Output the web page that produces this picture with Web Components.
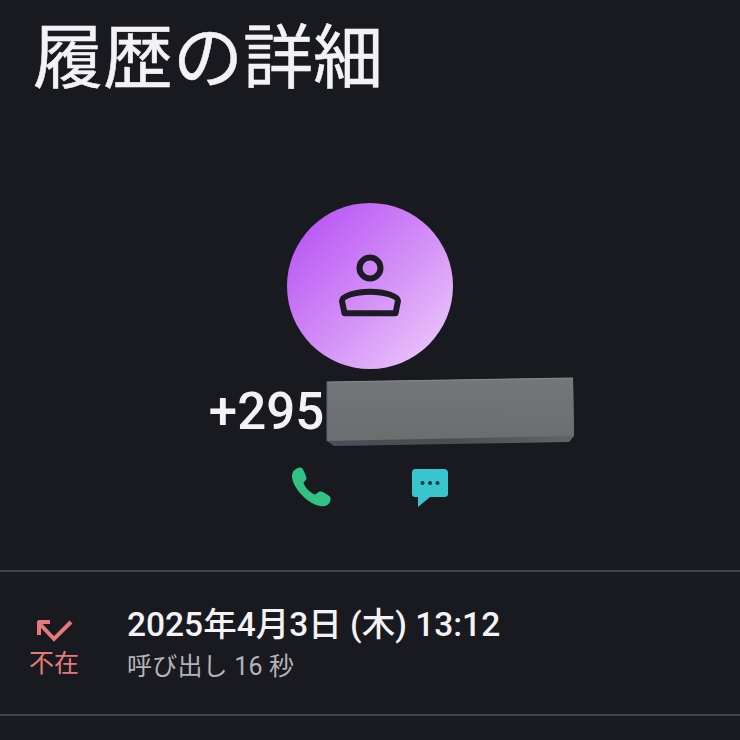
<!DOCTYPE html>
<html lang="ja">
<head>
<meta charset="utf-8">
<title>履歴の詳細</title>
<style>
  html, body { margin: 0; background: #191a1f; }
  body { font-family: Roboto, "Noto Sans CJK JP", sans-serif; color: #f3f3f6; }
</style>
</head>
<body>
<history-page>
  <span slot="title">履歴の詳細</span>
  <contact-card number="+295"></contact-card>
  <call-row date="2025年4月3日 (木) 13:12" sub="呼び出し 16 秒" kind="不在"></call-row>
</history-page>

<script>
const pageTemplate = document.createElement('template');
pageTemplate.innerHTML = `
  <style>
    :host {
      display: block;
      width: 740px;
      height: 740px;
      overflow: hidden;
      background: #191a1f;
    }
    h1 {
      margin: 0;
      padding: 10px 0 0 33px;
      height: 190px;
      box-sizing: border-box;
      font: 400 70px/85px "Noto Sans CJK JP", sans-serif;
      -webkit-text-stroke: 0.5px #f3f3f6;
      color: #f3f3f6;
    }
  </style>
  <h1><slot name="title"></slot></h1>
  <slot></slot>`;

customElements.define('history-page', class extends HTMLElement {
  constructor() {
    super();
    this.attachShadow({ mode: 'open' });
    this.shadowRoot.append(pageTemplate.content.cloneNode(true));
  }
});

const cardTemplate = document.createElement('template');
cardTemplate.innerHTML = `
  <style>
    :host {
      display: flex;
      flex-direction: column;
      align-items: center;
      height: 380px;
      padding-top: 13px;
      box-sizing: border-box;
    }
    .avatar {
      width: 166px;
      height: 166px;
      flex: none;
      border-radius: 50%;
      background: linear-gradient(135deg, #b650f5 5%, #cb7df6 40%, #eccafa 95%);
      display: flex;
      align-items: center;
      justify-content: center;
    }
    .number {
      display: flex;
      align-items: flex-start;
      height: 80px;
      margin-top: 5px;
      margin-left: 45px;
    }
    .digits {
      font: 500 51px/56px Roboto, sans-serif;
      margin-top: 10px;
    }
    .number svg { display: block; margin: 3px 0 0 2px; }
    .actions {
      display: flex;
      align-items: flex-start;
      gap: 80px;
      margin-top: 13px;
    }
    .actions svg { display: block; }
    .actions svg + svg { margin-top: 2px; }
  </style>
  <div class="avatar">
    <svg width="66" height="66" viewBox="0 0 66 66" fill="none" stroke="#1d1b24" stroke-width="6">
      <circle cx="33" cy="15" r="10.500"/>
      <path d="M7.500 60.300 H58.500 L61 48 C61 43 48 38.700 33 38.700 C18 38.700 5 43 5 48 Z" stroke-linejoin="round"/>
    </svg>
  </div>
  <div class="number">
    <span class="digits"></span>
    <!-- redaction block over the rest of the number -->
    <svg width="250" height="72" viewBox="0 0 250 72">
      <defs>
        <linearGradient id="face" x1="0" y1="0" x2="0" y2="1">
          <stop offset="0" stop-color="#757679"/>
          <stop offset="1" stop-color="#6c6d6f"/>
        </linearGradient>
        <linearGradient id="lip" x1="0" y1="0" x2="1" y2="0">
          <stop offset="0" stop-color="#4b4d5a"/>
          <stop offset=".5" stop-color="#4c4d4f"/>
          <stop offset="1" stop-color="#636466"/>
        </linearGradient>
      </defs>
      <path d="M1 5 L247 1 L248 59 L243 65 L8 69 L1 64 Z" fill="url(#lip)"/>
      <path d="M1 5 L247 1 L248 59 L1 64 Z" fill="url(#face)"/>
      <path d="M1 5 L247 1" stroke="#8a8b90" stroke-width="1" fill="none"/>
      <path d="M1 5 L1 64" stroke="#5d6280" stroke-width="1" fill="none"/>
    </svg>
  </div>
  <div class="actions">
    <svg width="40" height="40" viewBox="0 0 40 40">
      <path d="M2.500 4 C5 1.500 8.500 -0.500 11 1 C12.500 2.500 15 9 15.500 11 C15.800 13.500 13 14.500 12.500 16 C13.500 20 20 26.500 24 27.500 C26 26.500 27.500 24 30 24.500 C32.500 25.100 37.500 28 39 29.500 C40.500 32 39 36.500 36.500 38 C32 40.500 26 39 20 35.500 C11 30.500 1.500 18 1 10 C0.800 8 1.500 6 2.500 4 Z" fill="#33c083"/>
    </svg>
    <svg width="38" height="38" viewBox="0 0 38 38">
      <path d="M4 0 H33 Q37 0 37 4 V25 Q37 28 33 28 H19 L7 38 V28 H4 Q1 28 1 25 V4 Q1 0 4 0 Z" fill="#38c5cd"/>
      <circle cx="11.500" cy="14" r="2" fill="#17343c"/>
      <circle cx="19" cy="14" r="2" fill="#17343c"/>
      <circle cx="26.500" cy="14" r="2" fill="#17343c"/>
    </svg>
  </div>`;

customElements.define('contact-card', class extends HTMLElement {
  constructor() {
    super();
    this.attachShadow({ mode: 'open' });
    this.shadowRoot.append(cardTemplate.content.cloneNode(true));
  }

  connectedCallback() {
    this.shadowRoot.querySelector('.digits').textContent = this.getAttribute('number');
  }
});

const rowTemplate = document.createElement('template');
rowTemplate.innerHTML = `
  <style>
    :host {
      display: flex;
      align-items: flex-start;
      height: 146px;
      box-sizing: border-box;
      border-top: 2px solid #434448;
      border-bottom: 2px solid #434448;
      font-family: Roboto, "Noto Sans CJK JP", sans-serif;
    }
    .status {
      width: 108px;
      flex: none;
      padding-top: 48px;
      display: flex;
      flex-direction: column;
      align-items: center;
      color: #e57a78;
    }
    .status svg { display: block; margin-left: 2px; }
    .kind {
      font: 400 25px/32px "Noto Sans CJK JP", sans-serif;
      margin-top: 3px;
    }
    .text { padding: 33px 0 0 19px; }
    .date {
      font: 500 33.500px/40px Roboto, "Noto Sans CJK JP", sans-serif;
      color: #f3f3f6;
      white-space: nowrap;
    }
    .sub {
      font: 400 25px/36px Roboto, "Noto Sans CJK JP", sans-serif;
      color: #b3b4b8;
      letter-spacing: 0.2px;
      white-space: nowrap;
      margin-top: 4px;
    }
  </style>
  <div class="status">
    <svg width="38" height="22" viewBox="0 0 38 22" fill="none" stroke="currentColor" stroke-width="4">
      <path d="M2 2 H14 M3 1 V15 M3 3 L18 19 L35 2"/>
    </svg>
    <span class="kind"></span>
  </div>
  <div class="text">
    <div class="date"></div>
    <div class="sub"></div>
  </div>`;

customElements.define('call-row', class extends HTMLElement {
  constructor() {
    super();
    this.attachShadow({ mode: 'open' });
    this.shadowRoot.append(rowTemplate.content.cloneNode(true));
  }

  connectedCallback() {
    this.shadowRoot.querySelector('.date').textContent = this.getAttribute('date');
    this.shadowRoot.querySelector('.sub').textContent = this.getAttribute('sub');
    this.shadowRoot.querySelector('.kind').textContent = this.getAttribute('kind');
  }
});
</script>
</body>
</html>
